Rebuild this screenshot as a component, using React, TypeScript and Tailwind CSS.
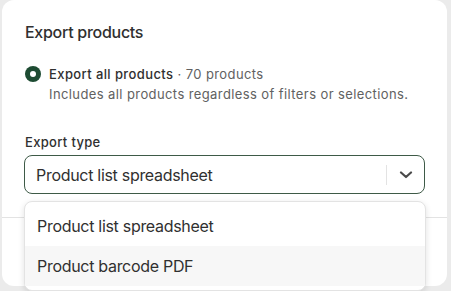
import React from "react";

export default function App() {
  return (
    <div
      className="w-[451px] h-[291px] bg-[#ebebeb] overflow-hidden"
      style={{ fontFamily: "Inter, 'Noto Sans', sans-serif" }}
    >
      <div className="relative ml-[2px] w-[445px] h-[286px] bg-white rounded-[12px] flex flex-col">
        <div className="pl-[23px] pr-[22px] pt-[20px] h-[218px] border-b border-[#e3e3e3]">
          <div className="text-[16px] leading-[24px] font-medium tracking-[-0.28px] text-[#303030]">Export products</div>
          <div className="mt-[20px] flex gap-[8px]">
            <div className="mt-[2px] w-[16px] h-[16px] rounded-full bg-[#1d4b32] flex items-center justify-center shrink-0">
              <div className="w-[6px] h-[6px] rounded-full bg-white" />
            </div>
            <div className="text-[13px] leading-[20px] tracking-[0.4px]">
              <div>
                <span className="font-medium text-[#303030]">Export all products</span>
                <span className="text-[#616161]"> · 70 products</span>
              </div>
              <div className="text-[#616161]">Includes all products regardless of filters or selections.</div>
            </div>
          </div>
          <div className="mt-[28px] text-[13px] leading-[20px] font-medium tracking-[0.33px] text-[#303030]">Export type</div>
          <div className="mt-[3px] w-[401px] -ml-[1px] h-[39px] rounded-[8px] border border-[#3e5a47] flex items-center">
            <div className="flex-1 pl-[11px] text-[16px] tracking-[-0.3px] text-[#303030]">Product list spreadsheet</div>
            <div className="w-px h-[20px] bg-[#e3e3e3]" />
            <div className="w-[37px] flex items-center justify-center">
              <svg width="14" height="8" viewBox="0 0 14 8" fill="none">
                <path d="M2 1.5l5 4.5 5-4.5" stroke="#4a4a4a" strokeWidth="2.2" strokeLinecap="round" strokeLinejoin="round" />
              </svg>
            </div>
          </div>
        </div>
        <div className="absolute left-[22px] top-[201px] w-[402px] bg-white border border-[#e3e3e3] rounded-[8px] py-[4px] shadow-[0_2px_6px_rgba(0,0,0,0.12)] text-[16px] tracking-[-0.3px] text-[#303030]">
          <div className="h-[40px] flex items-center pl-[12px]">Product list spreadsheet</div>
          <div className="h-[40px] flex items-center pl-[12px] bg-[#f7f7f7]">Product barcode PDF</div>
        </div>
      </div>
    </div>
  );
}
